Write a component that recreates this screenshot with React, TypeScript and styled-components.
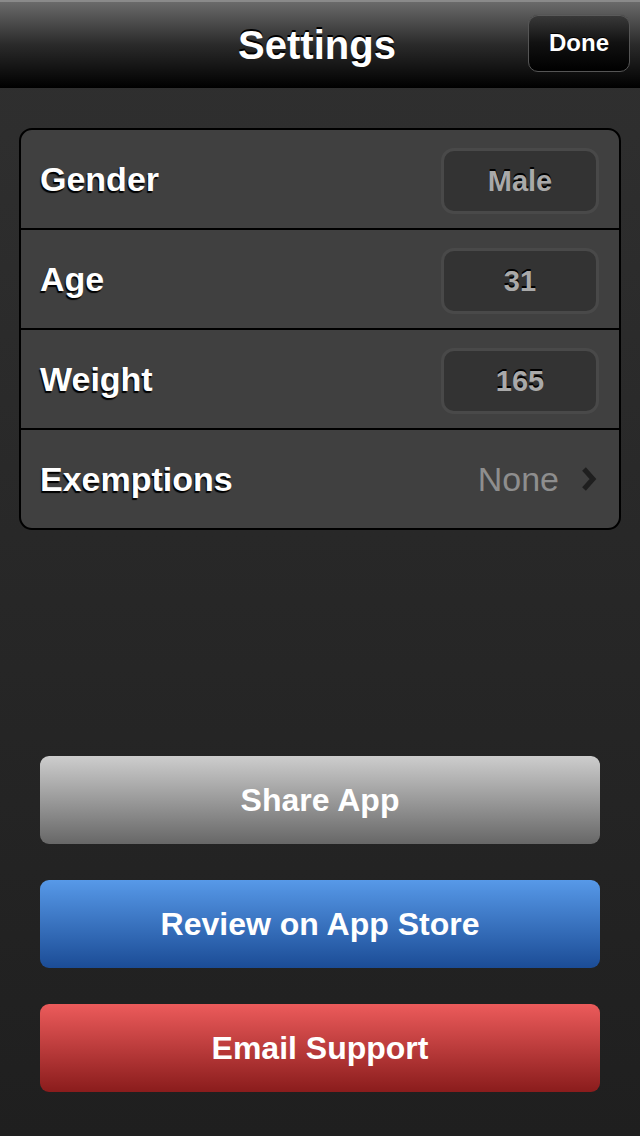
import styled, { createGlobalStyle } from 'styled-components'

const GlobalStyle = createGlobalStyle`
  html, body {
    margin: 0;
    padding: 0;
    background: #222;
  }
  body {
    font-family: "Liberation Sans", Arial, sans-serif;
  }
`

const Screen = styled.div`
  width: 640px;
  height: 1136px;
  display: flex;
  flex-direction: column;
  background: linear-gradient(#303030, #1f1f1f);
`

const NavBar = styled.header`
  height: 88px;
  box-sizing: border-box;
  border-top: 2px solid #8a8a8a;
  background: linear-gradient(#6a6a6a, #2a2a2a 50%, #000);
  display: grid;
  grid-template-columns: 1fr auto 1fr;
  align-items: center;
  padding: 0 10px;
`

const Title = styled.h1`
  grid-column: 2;
  margin: 0 6px 0 0;
  color: #fff;
  font-size: 40px;
  font-weight: bold;
  text-shadow: 0 -2px 0 #000;
`

const DoneButton = styled.button`
  justify-self: end;
  width: 102px;
  height: 58px;
  margin-top: -4px;
  padding: 0;
  border-radius: 10px;
  border: 1px solid #555;
  background: linear-gradient(#3a3a3a, #111 50%, #000);
  box-shadow: inset 0 1px 0 #5a5a5a;
  color: #fff;
  font-family: inherit;
  font-size: 24px;
  font-weight: bold;
  text-shadow: 0 -1px 0 #000;
`

const Content = styled.main`
  flex: 1;
  display: flex;
  flex-direction: column;
  padding: 40px 19px 44px;
`

const Card = styled.section`
  border: 2px solid #000;
  border-radius: 13px;
  background: #404040;
  overflow: hidden;
`

const Row = styled.div`
  height: 98px;
  display: flex;
  align-items: center;
  justify-content: space-between;
  padding: 0 20px 0 19px;
  & + & {
    border-top: 2px solid #000;
  }
`

const Label = styled.span`
  color: #fff;
  font-size: 34px;
  font-weight: bold;
  text-shadow: -1px 2px 1px #000;
`

const ValueBox = styled.div`
  width: 152px;
  height: 60px;
  box-sizing: content-box;
  display: flex;
  align-items: center;
  justify-content: center;
  border: 3px solid #494949;
  border-radius: 13px;
  background: #333;
  color: #a9a9a9;
  font-size: 29px;
  font-weight: bold;
  text-shadow: 0 -2px 0 #000;
  margin-top: 4px;
`

const Detail = styled.div`
  display: flex;
  align-items: center;
  gap: 22px;
  color: #8e8e8e;
  font-size: 34px;
  margin-right: 2px;
`

const Spacer = styled.div`
  flex: 1;
`

const Buttons = styled.div`
  display: flex;
  flex-direction: column;
  gap: 36px;
  padding: 0 21px;
`

const ActionButton = styled.button<{ $from: string; $to: string }>`
  height: 88px;
  border: none;
  border-radius: 9px;
  background: linear-gradient(${p => p.$from}, ${p => p.$to});
  color: #fff;
  font-family: inherit;
  font-size: 32px;
  font-weight: bold;
`

function Chevron() {
  return (
    <svg width="16" height="26" viewBox="0 0 16 26">
      <path d="M3 3 L12 13 L3 23" fill="none" stroke="#1f1f1f" strokeWidth="5" />
    </svg>
  )
}

const fields = [
  { label: 'Gender', value: 'Male' },
  { label: 'Age', value: '31' },
  { label: 'Weight', value: '165' },
]

function App() {
  return (
    <Screen>
      <GlobalStyle />
      <NavBar>
        <Title>Settings</Title>
        <DoneButton>Done</DoneButton>
      </NavBar>
      <Content>
        <Card>
          {fields.map(f => (
            <Row key={f.label}>
              <Label>{f.label}</Label>
              <ValueBox>{f.value}</ValueBox>
            </Row>
          ))}
          <Row>
            <Label>Exemptions</Label>
            <Detail>
              None
              <Chevron />
            </Detail>
          </Row>
        </Card>
        <Spacer />
        <Buttons>
          <ActionButton $from="#cdcdcd" $to="#676767">Share App</ActionButton>
          <ActionButton $from="#5799e8" $to="#1b4c96">Review on App Store</ActionButton>
          <ActionButton $from="#ec5b5b" $to="#8a1c1c">Email Support</ActionButton>
        </Buttons>
      </Content>
    </Screen>
  )
}

export default App
